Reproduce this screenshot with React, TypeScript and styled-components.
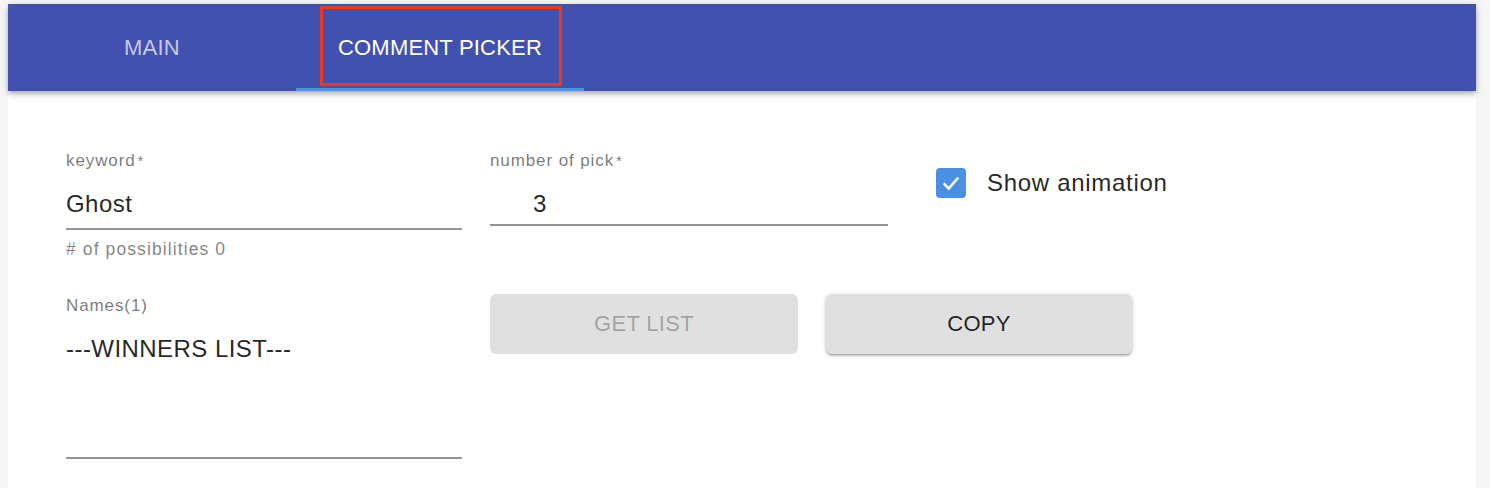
import React from "react";
import styled, { createGlobalStyle } from "styled-components";

const Global = createGlobalStyle`
  html, body { margin: 0; padding: 0; background: #f6f6f6; }
  body { font-family: "Liberation Sans", Arial, sans-serif; }
  * { box-sizing: border-box; }
`;

const Page = styled.div`
  width: 1490px;
  height: 488px;
  padding: 4px 14px 0 8px;
  overflow: hidden;
`;

const Panel = styled.div`
  background: #ffffff;
  height: 100%;
  display: flex;
  flex-direction: column;
`;

const AppBar = styled.header`
  height: 87px;
  background: #4250b0;
  display: flex;
  box-shadow: 0 2px 4px -1px rgba(0,0,0,0.2), 0 4px 5px 0 rgba(0,0,0,0.14), 0 1px 10px 0 rgba(0,0,0,0.12);
  position: relative;
  z-index: 1;
`;

const Tab = styled.div<{ $active?: boolean }>`
  position: relative;
  width: 288px;
  display: flex;
  align-items: center;
  justify-content: center;
  font-size: 22px;
  letter-spacing: 0.2px;
  text-transform: uppercase;
  color: ${(p) => (p.$active ? "#ffffff" : "rgba(255,255,255,0.7)")};
  &::after {
    content: "";
    display: ${(p) => (p.$active ? "block" : "none")};
    position: absolute;
    left: 0;
    right: 0;
    bottom: 0;
    height: 3px;
    background: #4b93e6;
  }
`;

const Highlight = styled.div`
  position: absolute;
  left: 24px;
  top: 2px;
  width: 242px;
  height: 80px;
  border: 3px solid #ea3a22;
  pointer-events: none;
`;

const Content = styled.main`
  padding: 60px 0 0 58px;
  display: flex;
  flex-direction: column;
`;

const Row = styled.div`
  display: flex;
  align-items: flex-start;
`;

const Field = styled.div<{ $width: number; $mr?: number }>`
  width: ${(p) => p.$width}px;
  margin-right: ${(p) => p.$mr ?? 0}px;
  display: flex;
  flex-direction: column;
`;

const Label = styled.label`
  font-size: 17px;
  line-height: 20px;
  letter-spacing: 0.9px;
  color: rgba(0,0,0,0.54);
`;

const Req = styled.span`
  margin-left: 2px;
  font-size: 15px;
`;

const InputText = styled.div<{ $indent?: number; $h?: number }>`
  font-size: 24px;
  line-height: 28px;
  letter-spacing: 0.45px;
  color: rgba(0,0,0,0.87);
  padding: 19px 0 0 ${(p) => p.$indent ?? 0}px;
  height: ${(p) => p.$h ?? 59}px;
  border-bottom: 2px solid #949494;
`;

const Helper = styled.div`
  font-size: 17.5px;
  line-height: 20px;
  letter-spacing: 1.1px;
  margin-top: 9px;
  color: rgba(0,0,0,0.5);
`;

const CheckRow = styled.div`
  display: flex;
  align-items: center;
  gap: 21px;
  margin-top: 17px;
  font-size: 24px;
  letter-spacing: 0.7px;
  color: rgba(0,0,0,0.87);
`;

const Box = styled.div`
  width: 30px;
  height: 30px;
  border-radius: 4px;
  background: #4a8fe6;
  display: flex;
  align-items: center;
  justify-content: center;
`;

const Buttons = styled.div`
  display: flex;
  gap: 28px;
  margin-top: -2px;
`;

const Button = styled.button<{ $disabled?: boolean }>`
  width: ${(p) => (p.$disabled ? 308 : 306)}px;
  height: 60px;
  border: none;
  border-radius: 6px;
  background: #e0e0e0;
  font-family: "Liberation Sans", Arial, sans-serif;
  font-size: 22px;
  letter-spacing: 0.3px;
  color: ${(p) => (p.$disabled ? "rgba(0,0,0,0.3)" : "rgba(0,0,0,0.87)")};
  box-shadow: ${(p) =>
    p.$disabled
      ? "none"
      : "0 1px 5px 0 rgba(0,0,0,0.2), 0 2px 2px 0 rgba(0,0,0,0.14), 0 3px 1px -2px rgba(0,0,0,0.12)"};
`;

const Row2 = styled(Row)`
  margin-top: 37px;
`;

export default function App() {
  return (
    <>
      <Global />
      <Page>
        <Panel>
          <AppBar>
            <Tab>Main</Tab>
            <Tab $active>
              Comment Picker
              <Highlight />
            </Tab>
          </AppBar>
          <Content>
            <Row>
              <Field $width={396} $mr={28}>
                <Label>
                  keyword<Req>*</Req>
                </Label>
                <InputText>Ghost</InputText>
                <Helper># of possibilities 0</Helper>
              </Field>
              <Field $width={398} $mr={48}>
                <Label>
                  number of pick<Req>*</Req>
                </Label>
                <InputText $indent={43} $h={55}>3</InputText>
              </Field>
              <CheckRow>
                <Box>
                  <svg width="22" height="22" viewBox="0 0 24 24">
                    <path d="M4 12.5 L9.5 18 L20 6" fill="none" stroke="#fff" strokeWidth="2.8" />
                  </svg>
                </Box>
                Show animation
              </CheckRow>
            </Row>
            <Row2>
              <Field $width={396} $mr={28}>
                <Label>Names(1)</Label>
                <InputText $h={143}>---WINNERS LIST---</InputText>
              </Field>
              <Buttons>
                <Button $disabled>GET LIST</Button>
                <Button>COPY</Button>
              </Buttons>
            </Row2>
          </Content>
        </Panel>
      </Page>
    </>
  );
}
